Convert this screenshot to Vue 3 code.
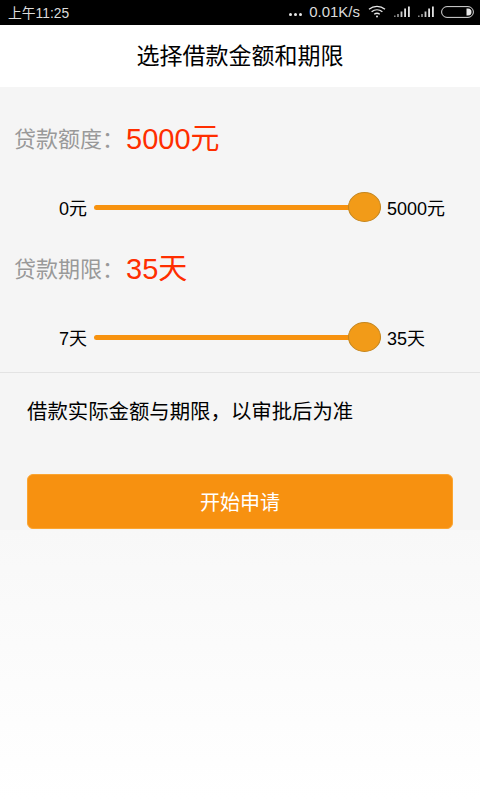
<script setup>
const sliders = [
  { label: '贷款额度\uFF1A', value: '5000元', min: '0元', max: '5000元' },
  { label: '贷款期限\uFF1A', value: '35天', min: '7天', max: '35天' }
]
</script>

<template>
  <div class="page">
    <div class="status">
      <span class="time">上午11:25</span>
      <div class="status-right">
        <span class="dots"><i></i><i></i><i></i></span>
        <span class="speed">0.01K/s</span>
        <svg class="wifi" width="18" height="13" viewBox="0 0 18 13" fill="none" stroke="#e8e8e8" stroke-width="1.3">
          <path d="M1 4.2C5.6 0.3 12.4 0.3 17 4.2" />
          <path d="M3.6 6.8C6.8 4.2 11.2 4.2 14.4 6.8" />
          <path d="M6.2 9.2C7.9 8 10.1 8 11.8 9.2" />
          <circle cx="9" cy="11.5" r="1" fill="#e8e8e8" stroke="none" />
        </svg>
        <svg class="signal" width="17" height="11" viewBox="0 0 17 11" fill="#e0e0e0">
          <rect x="0" y="9.5" width="1.6" height="1.5" opacity=".6" />
          <rect x="3.2" y="8" width="1.6" height="3" opacity=".7" />
          <rect x="6.6" y="5.5" width="1.8" height="5.5" opacity=".9" />
          <rect x="10.2" y="2.5" width="1.8" height="8.5" />
          <rect x="14" y="0.5" width="1.8" height="10.5" />
        </svg>
        <svg class="signal" width="17" height="11" viewBox="0 0 17 11" fill="#e0e0e0">
          <rect x="0" y="9.5" width="1.6" height="1.5" opacity=".6" />
          <rect x="3.2" y="8" width="1.6" height="3" opacity=".7" />
          <rect x="6.6" y="5.5" width="1.8" height="5.5" opacity=".9" />
          <rect x="10.2" y="2.5" width="1.8" height="8.5" />
          <rect x="14" y="0.5" width="1.8" height="10.5" />
        </svg>
        <svg class="battery" width="33" height="12" viewBox="0 0 33 12" fill="none">
          <rect x="0.6" y="0.6" width="31.8" height="10.8" rx="5.4" stroke="#d8d8d8" stroke-width="1" />
          <path d="M25.5 2.5h1.5a3.5 3.5 0 0 1 0 7h-1.5z" fill="#e8e8e8" />
        </svg>
      </div>
    </div>

    <header class="header">选择借款金额和期限</header>

    <main class="panel">
      <section v-for="(s, i) in sliders" :key="i" class="group">
        <div class="heading">
          <span class="label">{{ s.label }}</span>
          <span class="value">{{ s.value }}</span>
        </div>
        <div class="slider-row">
          <span class="min">{{ s.min }}</span>
          <div class="track">
            <div class="thumb"></div>
          </div>
          <span class="max">{{ s.max }}</span>
        </div>
      </section>

      <div class="divider"></div>
      <p class="note">借款实际金额与期限&#xFF0C;以审批后为准</p>
      <button class="apply">开始申请</button>
    </main>

    <div class="fade"></div>
  </div>
</template>

<style scoped>
.page {
  width: 480px;
  height: 800px;
  display: flex;
  flex-direction: column;
  overflow: hidden;
  font-family: "Liberation Sans", "Noto Sans CJK SC", sans-serif;
  background: #fff;
}
.status {
  height: 25px;
  flex: none;
  background: #000;
  color: #dcdcdc;
  display: flex;
  align-items: center;
  justify-content: space-between;
  padding: 0 6px 2px 8px;
  box-sizing: border-box;
}
.time {
  font-size: 13.8px;
}
.status-right {
  display: flex;
  align-items: center;
}
.dots {
  display: flex;
  gap: 2px;
  margin-right: 7px;
  margin-top: 5px;
}
.dots i {
  display: block;
  width: 3px;
  height: 3px;
  border-radius: 50%;
  background: #e8e8e8;
}
.speed {
  font-size: 15px;
  margin-right: 8px;
}
.wifi {
  margin-right: 8px;
}
.signal {
  margin-right: 7px;
}
.signal + .signal {
  margin-right: 6px;
}
.header {
  height: 62px;
  flex: none;
  padding-bottom: 4px;
  box-sizing: border-box;
  background: #fff;
  color: #000;
  font-size: 23px;
  display: flex;
  align-items: center;
  justify-content: center;
}
.panel {
  height: 443px;
  flex: none;
  background: #f5f5f5;
  display: flex;
  flex-direction: column;
}
.group {
  height: 130px;
  flex: none;
  padding: 30px 0 0 14px;
  box-sizing: border-box;
}
.heading {
  display: flex;
  align-items: center;
  height: 40px;
}
.label {
  font-size: 22px;
  color: #999;
  width: 112px;
}
.value {
  font-size: 29px;
  color: #ff2e00;
  margin-bottom: 2px;
}
.slider-row {
  display: flex;
  align-items: center;
  height: 34px;
  margin-top: 33px;
  margin-left: -14px;
  font-size: 18px;
  color: #000;
}
.min {
  width: 87px;
  text-align: right;
}
.track {
  width: 287px;
  margin: 0 6px 0 7px;
  height: 5px;
  border-radius: 3px;
  background: #f7920f;
  position: relative;
}
.thumb {
  position: absolute;
  right: 0;
  top: -13px;
  width: 33px;
  height: 30px;
  box-sizing: border-box;
  border-radius: 50%;
  background: #f29b18;
  border: 1.5px solid #c4861f;
}
.divider {
  height: 1px;
  background: #e3e3e3;
  flex: none;
  margin-top: 25px;
}
.note {
  margin: 26px 0 0 27px;
  font-size: 20.4px;
  line-height: 26px;
  color: #000;
}
.apply {
  margin: 49px 27px 0;
  height: 55px;
  border: 1px solid #fba531;
  border-radius: 6px;
  background: #f79110;
  color: #fff;
  font-family: inherit;
  font-size: 20px;
  padding: 0;
}
.fade {
  flex: 1;
  background: linear-gradient(#f8f8f8, #ffffff);
}
</style>
